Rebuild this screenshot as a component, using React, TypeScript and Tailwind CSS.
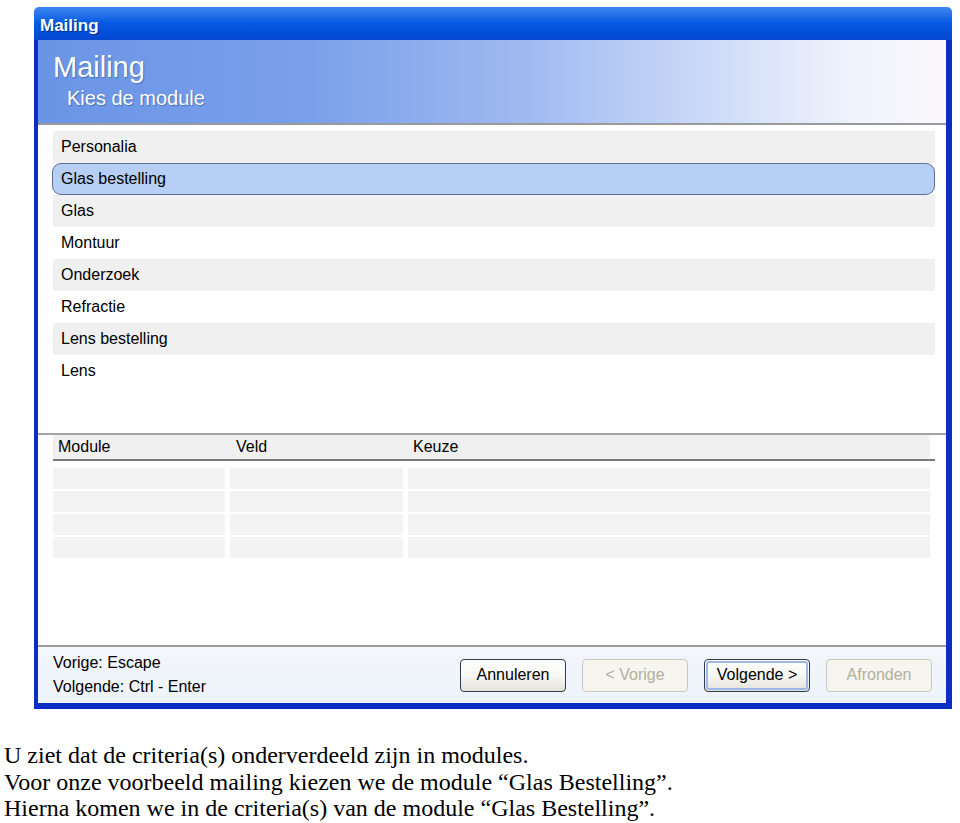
import React from 'react';

const modules = [
  'Personalia',
  'Glas bestelling',
  'Glas',
  'Montuur',
  'Onderzoek',
  'Refractie',
  'Lens bestelling',
  'Lens',
];

const ui = { fontFamily: "'Liberation Sans', Arial, sans-serif" };

function XpButton({ label, disabled, primary }: { label: string; disabled?: boolean; primary?: boolean }) {
  if (disabled) {
    return (
      <div className="w-[106px] h-[33px] rounded-[4px] border border-[#cac8bb] bg-[#f6f5ef] flex items-center justify-center text-[16px] text-[#b3b09f]">
        {label}
      </div>
    );
  }
  return (
    <div className="w-[106px] h-[33px] rounded-[4px] border border-[#2f3a4a] bg-gradient-to-b from-white via-[#f7f7f4] to-[#e3e2da] flex items-center justify-center">
      <div
        className={`w-[102px] h-[29px] rounded-[3px] flex items-center justify-center text-[16px] text-black ${
          primary ? 'border-2 border-[#9db7e8]' : ''
        }`}
      >
        {label}
      </div>
    </div>
  );
}

export default function App() {
  return (
    <div className="min-h-screen bg-white pt-[7px]" style={ui}>
      <div className="ml-[34px] w-[918px]">
        {/* title bar */}
        <div className="h-[33px] rounded-t-[5px] bg-gradient-to-b from-[#3a86f0] via-[#0558e2] to-[#0347cf] flex items-center pl-[6px] pt-[5px]">
          <span className="text-white font-bold text-[17px] [text-shadow:1px_1px_0_#0a2b8a]">Mailing</span>
        </div>

        <div className="border-l-[4px] border-r-[6px] border-b-[6px] border-[#0b2fc4] flex flex-col">
          {/* header */}
          <div className="h-[85px] bg-[linear-gradient(to_right,#6a94e6_0%,#7aa0ea_30%,#a2bbf1_55%,#cfdcf8_75%,#f0f3fc_90%,#fbf8fc_100%)] pl-[15px] pt-[11px] border-b-2 border-[#9a9a9a]">
            <div className="text-white text-[29px] leading-[32px] [text-shadow:1px_1px_1px_#4a6fb8]">Mailing</div>
            <div className="text-white text-[20px] leading-[24px] pl-[14px] mt-[3px] [text-shadow:1px_1px_1px_#4a6fb8]">
              Kies de module
            </div>
          </div>

          {/* module list */}
          <div className="h-[308px] bg-white pt-[6px] pl-[15px] pr-[11px]">
            {modules.map((m, i) => {
              const selected = i === 1;
              return (
                <div
                  key={m}
                  className={`h-[32px] flex items-center text-[16px] text-black ${
                    selected
                      ? 'bg-[#b7cff4] border border-[#5d6f93] rounded-[9px] -ml-[1px] pl-[8px]'
                      : i % 2 === 0
                      ? 'bg-[#f0f0f0] pl-[8px]'
                      : 'bg-white pl-[8px]'
                  }`}
                >
                  {m}
                </div>
              );
            })}
          </div>

          {/* criteria table */}
          <div className="h-[212px] bg-white border-t-2 border-[#a3a3a3] pl-[15px] pr-[11px]">
            <div className="h-[24px] bg-[#f0f0f0] mr-[5px] flex items-center text-[16px] text-black">
              <div className="w-[177px] pl-[5px]">Module</div>
              <div className="w-[178px] pl-[6px]">Veld</div>
              <div className="flex-1 pl-[5px]">Keuze</div>
            </div>
            <div className="h-[2px] bg-[#7a7a7a]" />
            <div className="mt-[7px] mr-[5px] flex flex-col gap-[2px]">
              {[0, 1, 2, 3].map(r => (
                <div key={r} className="h-[21px] flex gap-[5px]">
                  <div className="w-[172px] bg-[#f3f3f3]" />
                  <div className="w-[173px] bg-[#f3f3f3]" />
                  <div className="flex-1 bg-[#f3f3f3]" />
                </div>
              ))}
            </div>
          </div>

          {/* footer */}
          <div className="h-[58px] border-t-2 border-[#9c9c9c] bg-gradient-to-b from-[#f3f6fb] to-[#eef4fc] flex items-center pl-[15px] pr-[14px]">
            <div className="flex-1 text-[16px] leading-[24px] text-black">
              <div>Vorige: Escape</div>
              <div>Volgende: Ctrl - Enter</div>
            </div>
            <div className="flex gap-[16px]">
              <XpButton label="Annuleren" />
              <XpButton label="< Vorige" disabled />
              <XpButton label="Volgende >" primary />
              <XpButton label="Afronden" disabled />
            </div>
          </div>
        </div>
      </div>

      <div
        className="mt-[33px] pl-[4px] text-[24px] leading-[26.5px] text-black"
        style={{ fontFamily: "'Liberation Serif', 'Times New Roman', serif" }}
      >
        <div>U ziet dat de criteria(s) onderverdeeld zijn in modules.</div>
        <div>Voor onze voorbeeld mailing kiezen we de module “Glas Bestelling”.</div>
        <div>Hierna komen we in de criteria(s) van de module “Glas Bestelling”.</div>
      </div>
    </div>
  );
}
